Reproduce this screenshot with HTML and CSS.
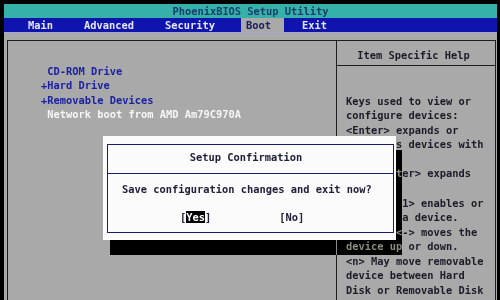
FILE: index.html
```html
<!DOCTYPE html>
<html>
<head>
<meta charset="utf-8">
<link rel="stylesheet" href="styles.css">
</head>
<body>
<div class="screen">
  <div class="title">PhoenixBIOS Setup Utility</div>
  <nav class="menu">
    <span class="menu-item">Main</span>
    <span class="menu-item">Advanced</span>
    <span class="menu-item">Security</span>
    <span class="menu-item active">Boot</span>
    <span class="menu-item">Exit</span>
  </nav>
  <div class="main">
    <div class="frame">
      <div class="left">
        <div class="item dev"> CD-ROM Drive</div>
        <div class="item dev">+Hard Drive</div>
        <div class="item dev">+Removable Devices</div>
        <div class="item net"> Network boot from AMD Am79C970A</div>
      </div>
      <div class="right">
        <div class="help-head">Item Specific Help</div>
        <div class="help-text">Keys used to view or
configure devices:
&lt;Enter&gt; expands or
collapses devices with
a + or -
&lt;Ctrl+Enter&gt; expands
all
&lt;Shift + 1&gt; enables or
disables a device.
&lt;+&gt; and &lt;-&gt; moves the
device up or down.
&lt;n&gt; May move removable
device between Hard
Disk or Removable Disk</div>
      </div>
    </div>
  </div>
  <div class="dialog">
    <div class="dlg-inner">
      <div class="dlg-head">Setup Confirmation</div>
      <div class="dlg-msg">Save configuration changes and exit now?</div>
      <div class="dlg-btns">
        <span>[<span class="sel">Yes</span>]</span>
        <span>[No]</span>
      </div>
    </div>
  </div>
  <div class="shadow shadow-r"></div>
  <div class="shadow shadow-b"></div>
</div>
</body>
</html>
```
FILE: styles.css
```css
* { box-sizing: border-box; margin: 0; padding: 0; }
html, body { background: #000; }
body {
  width: 500px;
  height: 300px;
  overflow: hidden;
  font-family: "DejaVu Sans Mono", "Liberation Mono", monospace;
  font-size: 10.38px;
  font-weight: bold;
}
.screen {
  position: relative;
  margin: 4px 3px 0 4px;
  height: 296px;
  background: #a9a9a9;
  display: flex;
  flex-direction: column;
}
.title {
  height: 14px;
  line-height: 14px;
  background: #35b1aa;
  color: #1a3d6e;
  text-align: center;
}
.menu {
  height: 15px;
  background: #0f14ae;
  border-bottom: 1px solid #a8a8d8;
  display: flex;
  gap: 13px;
  padding-left: 19px;
  color: #e6e6f0;
  line-height: 14px;
}
.menu-item { padding: 0 13px 0 5px; }
.menu-item.active { background: #a9a9a9; color: #1c2060; }
.main {
  flex: 1;
  display: flex;
  padding: 7px 1px 0 3px;
  min-height: 0;
}
.frame {
  flex: 1;
  border: 1px solid #1e1e1e;
  border-bottom: none;
  display: grid;
  grid-template-columns: 328px 1fr;
}
.left {
  padding: 22.75px 0 0 33px;
  line-height: 14.55px;
}
.item { white-space: pre; height: 14.55px; }
.dev { color: #1c22a2; }
.net { color: #f6f6f6; }
.right { border-left: 1px solid #1e1e1e; }
.help-head {
  height: 25px;
  padding: 6.8px 5px 0 0;
  line-height: 14.55px;
  text-align: center;
  border-bottom: 1px solid #1e1e1e;
  color: #1c1c28;
}
.help-text {
  padding: 27.75px 0 0 9px;
  line-height: 14.55px;
  white-space: pre;
  color: #1c1c28;
}
.dialog {
  position: absolute;
  left: 99px;
  top: 132px;
  width: 293px;
  height: 104px;
  background: #fbfbfb;
  padding: 8px 2px 7px 4px;
  display: flex;
}
.dlg-inner {
  flex: 1;
  border: 1px solid #1d1d6e;
  display: flex;
  flex-direction: column;
  color: #20203a;
  line-height: 14.55px;
}
.dlg-head {
  height: 29px;
  padding: 5px 9px 0 0;
  text-align: center;
  border-bottom: 1px solid #1d1d6e;
}
.dlg-msg { padding: 7.75px 0 0 14px; white-space: pre; }
.dlg-btns {
  display: flex;
  gap: 68px;
  margin-top: 13.45px;
  padding-left: 72px;
}
.sel { background: #000; color: #fff; }
.shadow {
  position: absolute;
  background: #a9a9a9;
  mix-blend-mode: difference;
}
.shadow-r { left: 392px; top: 146px; width: 6px; height: 90px; }
.shadow-b { left: 106px; top: 236px; width: 292px; height: 15px; }
```
